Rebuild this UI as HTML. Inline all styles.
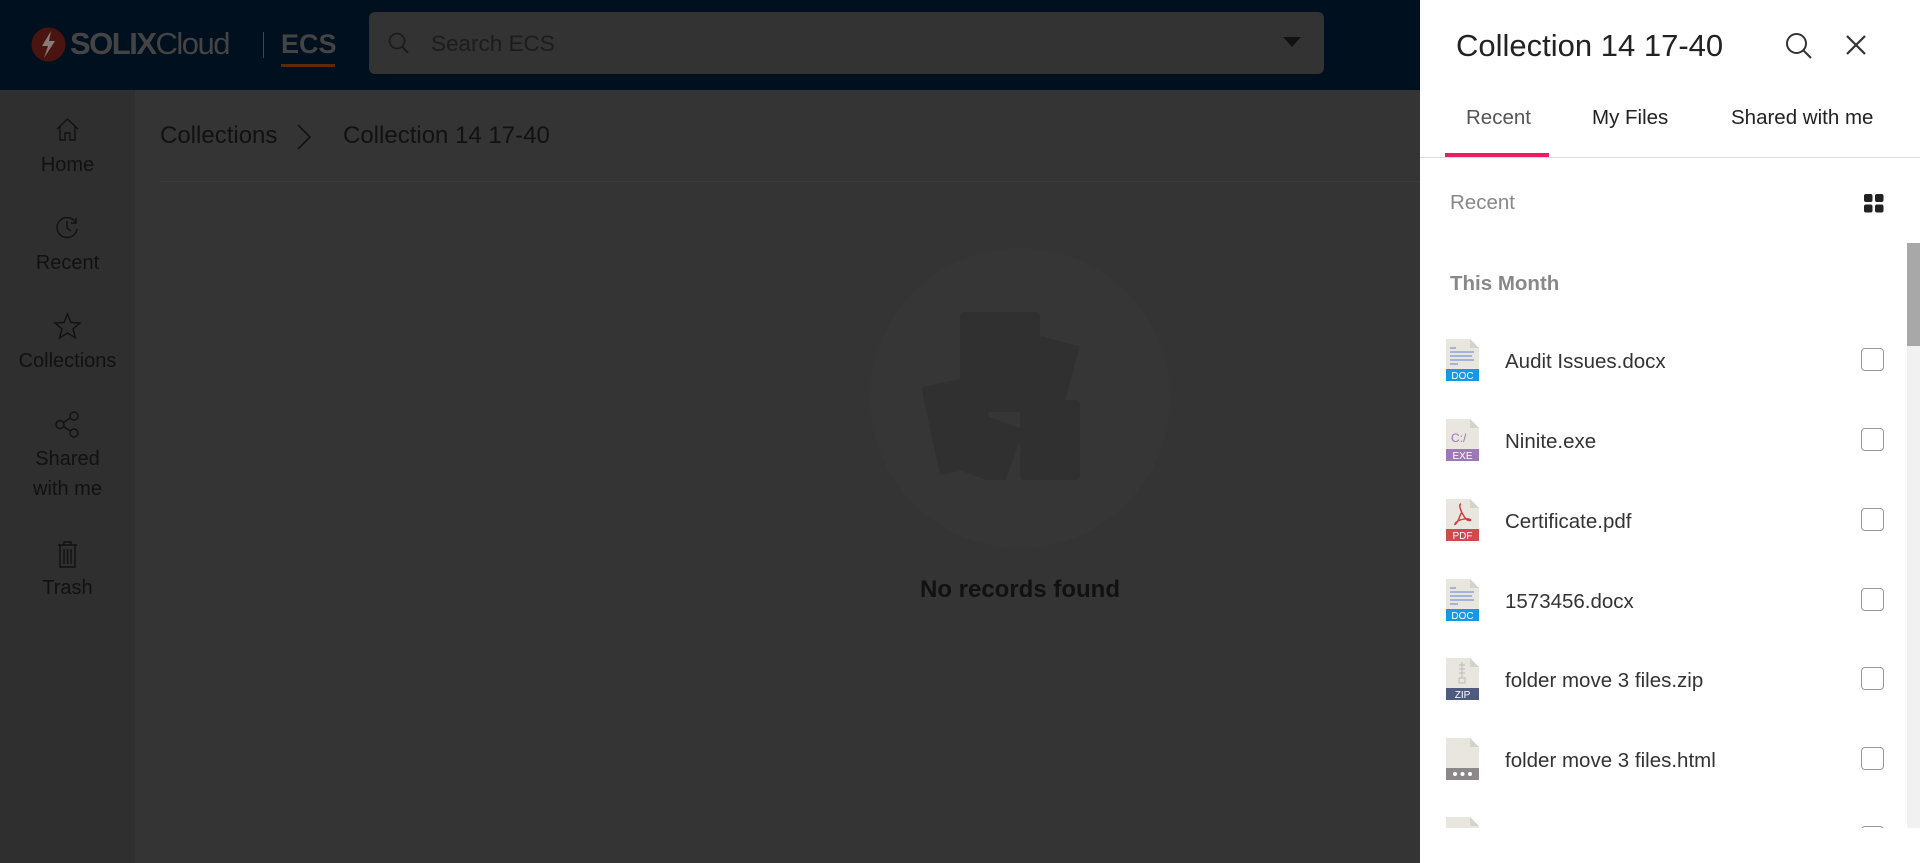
<!DOCTYPE html>
<html><head><meta charset="utf-8"><style>
*{margin:0;padding:0;box-sizing:border-box}
body{width:1920px;height:863px;overflow:hidden;position:relative;background:#343434;font-family:"Segoe UI","Liberation Sans",sans-serif}
.hdr{position:absolute;left:0;top:0;width:1420px;height:90px;background:#00101f}
.side{position:absolute;left:0;top:90px;width:135px;height:773px;background:#2f2f2f}
.item{position:absolute;left:0;width:135px;text-align:center;color:#111;font-size:20px;line-height:30px}
.ab{position:absolute}
.panel{position:absolute;left:1420px;top:0;width:500px;height:863px;background:#fff}
.row{position:absolute;left:0;width:500px;height:60px}
.row .nm{position:absolute;left:85px;top:50%;transform:translateY(-50%);font-size:20.5px;color:#333;white-space:nowrap;margin-top:2px}
.row .cb{position:absolute;left:441px;top:50%;margin-top:-12px;width:23px;height:23px;border:1.5px solid #999;border-radius:4px}
.fi{position:absolute;left:26px;top:50%;margin-top:-21px;width:33px;height:42px}
</style></head><body>
<div class="hdr">
  <svg class="ab" style="left:31px;top:27px" width="35" height="35" viewBox="0 0 35 35"><circle cx="17.5" cy="17.5" r="17" fill="#4a1410"/><path d="M20 4 L11 19 L17 19 L13 31 L24 14 L18 14 Z" fill="#8a7a78"/></svg>
  <div class="ab" style="left:70px;top:26px;font-size:31px;font-weight:bold;color:#444;letter-spacing:-1.5px;font-family:'Liberation Sans',sans-serif">SOLIX<span style="font-weight:normal">Cloud</span></div>
  <div class="ab" style="left:263px;top:32px;width:1px;height:26px;background:#444"></div>
  <div class="ab" style="left:281px;top:29px;font-size:27px;font-weight:bold;color:#444;font-family:'Liberation Sans',sans-serif">ECS</div>
  <div class="ab" style="left:281px;top:64px;width:54px;height:3px;background:#5a2a10"></div>
  <div class="ab" style="left:369px;top:12px;width:955px;height:62px;background:#333;border-radius:6px"></div>
  <svg class="ab" style="left:388px;top:32px" width="22" height="24" viewBox="0 0 22 24"><circle cx="9" cy="9" r="7.5" fill="none" stroke="#1a1a1a" stroke-width="1.6"/><path d="M14.5 15 L20 21" stroke="#1a1a1a" stroke-width="2"/></svg>
  <div class="ab" style="left:431px;top:31px;font-size:22.5px;color:#1c1c1c">Search ECS</div>
  <svg class="ab" style="left:1283px;top:37px" width="18" height="11"><path d="M0 0 L18 0 L9 10 Z" fill="#111"/></svg>
</div>
<div class="side">
  <svg class="ab" style="left:54px;top:26px" width="27" height="27" viewBox="0 0 27 27" fill="none" stroke="#111" stroke-width="1.4"><path d="M3 13 L13.5 3 L24 13 M6 11 V24 H11 V17 H16 V24 H21 V11"/></svg>
  <div class="item" style="top:60px">Home</div>
  <svg class="ab" style="left:54px;top:124px" width="27" height="27" viewBox="0 0 27 27" fill="none" stroke="#111" stroke-width="1.4"><path d="M22 9 A10 10 0 1 0 23 15"/><path d="M13 7 V14 L17 17"/><path d="M22 4 V9 H17"/></svg>
  <div class="item" style="top:158px">Recent</div>
  <svg class="ab" style="left:53px;top:222px" width="29" height="29" viewBox="0 0 29 29" fill="none" stroke="#111" stroke-width="1.4"><path d="M14.5 2 L18 10.5 L27 11 L20 17 L22.5 26 L14.5 21 L6.5 26 L9 17 L2 11 L11 10.5 Z"/></svg>
  <div class="item" style="top:256px">Collections</div>
  <svg class="ab" style="left:53px;top:320px" width="29" height="29" viewBox="0 0 29 29" fill="none" stroke="#111" stroke-width="1.4"><circle cx="21" cy="6" r="4"/><circle cx="7" cy="14.5" r="4"/><circle cx="21" cy="23" r="4"/><path d="M10.5 12.5 L17.5 8 M10.5 16.5 L17.5 21"/></svg>
  <div class="item" style="top:354px">Shared<br>with me</div>
  <svg class="ab" style="left:54px;top:450px" width="27" height="29" viewBox="0 0 27 29" fill="none" stroke="#111" stroke-width="1.4"><path d="M4 5 H23 M10 5 V2 H17 V5 M6 5 V27 H21 V5 M10 9 V24 M13.5 9 V24 M17 9 V24"/></svg>
  <div class="item" style="top:483px">Trash</div>
</div>
<div class="ab" style="left:160px;top:122px;font-size:24px;color:#111">Collections</div>
<svg class="ab" style="left:296px;top:123px" width="16" height="28"><path d="M2 2 L14 14 L2 26" fill="none" stroke="#111" stroke-width="1.6"/></svg>
<div class="ab" style="left:343px;top:122px;font-size:24px;color:#111">Collection 14 17-40</div>
<div class="ab" style="left:160px;top:181px;width:1260px;height:1px;background:#3a3a3a"></div>
<div class="ab" style="left:870px;top:248px;width:300px;height:300px;border-radius:50%;background:#363636"></div>
<svg class="ab" style="left:920px;top:300px" width="200" height="180" viewBox="0 0 200 180" fill="#303030"><rect x="40" y="12" width="80" height="100" rx="4"/><rect x="110" y="40" width="40" height="80" transform="rotate(15 130 80)"/><rect x="10" y="80" width="60" height="90" rx="4" transform="rotate(-12 40 125)"/><rect x="50" y="120" width="45" height="60" transform="rotate(20 72 150)"/><rect x="100" y="100" width="60" height="80" rx="4"/></svg>
<div class="ab" style="left:870px;top:576px;width:300px;text-align:center;font-size:24px;font-weight:600;color:#111">No records found</div>

<div class="panel">
  <div class="ab" style="left:36px;top:28px;font-size:31px;color:#222">Collection 14 17-40</div>
  <svg class="ab" style="left:365px;top:32px" width="28" height="28" viewBox="0 0 28 28" fill="none" stroke="#333" stroke-width="2"><circle cx="11.5" cy="11.5" r="9.5"/><path d="M18.5 18.5 L26 26"/></svg>
  <svg class="ab" style="left:426px;top:35px" width="20" height="20" viewBox="0 0 20 20" stroke="#333" stroke-width="2.2"><path d="M1 1 L19 19 M19 1 L1 19"/></svg>
  <div class="ab" style="left:46px;top:106px;font-size:20.5px;color:#555">Recent</div>
  <div class="ab" style="left:172px;top:106px;font-size:20.5px;color:#222">My Files</div>
  <div class="ab" style="left:311px;top:106px;font-size:20.5px;color:#222">Shared with me</div>
  <div class="ab" style="left:25px;top:153px;width:104px;height:4px;background:#ea1e63"></div>
  <div class="ab" style="left:0;top:157px;width:500px;height:1px;background:#dcdcdc"></div>
  <div class="ab" style="left:30px;top:191px;font-size:20.5px;color:#888">Recent</div>
  <svg class="ab" style="left:444px;top:194px" width="20" height="19"><rect x="0" y="0" width="8.5" height="8" rx="2" fill="#222"/><rect x="11" y="0" width="8.5" height="8" rx="2" fill="#222"/><rect x="0" y="10.5" width="8.5" height="8" rx="2" fill="#222"/><rect x="11" y="10.5" width="8.5" height="8" rx="2" fill="#222"/></svg>
  <div class="ab" style="left:487px;top:243px;width:13px;height:585px;background:#f1f1f1"></div>
  <div class="ab" style="left:487px;top:243px;width:13px;height:103px;background:#a8a8a8"></div>
  <div class="ab" style="left:30px;top:272px;font-size:20.5px;font-weight:600;color:#888">This Month</div>
  <div class="ab" style="left:0;top:320px;width:487px;height:508px;overflow:hidden">
    <div class="row" style="top:10px"><svg class="fi" viewBox="0 0 33 42"><path d="M0 0 H24 L33 9 V42 H0 Z" fill="#e8e6df"/><path d="M24 0 V9 H33" fill="#d4d2ca"/><path d="M4 9 H10 M4 13 H28 M4 17 H26 M4 21 H28 M4 25 H12" stroke="#7a95d8" stroke-width="1.2"/><rect x="0" y="30" width="33" height="12" fill="#1a96e8"/><text x="16.5" y="40" font-size="10" fill="#fff" text-anchor="middle" font-family="Liberation Sans">DOC</text></svg><div class="nm">Audit Issues.docx</div><div class="cb"></div></div>
    <div class="row" style="top:90px"><svg class="fi" viewBox="0 0 33 42"><path d="M0 0 H24 L33 9 V42 H0 Z" fill="#e8e6df"/><path d="M24 0 V9 H33" fill="#d4d2ca"/><text x="5" y="23" font-size="12" fill="#9a74b4" font-family="Liberation Sans">C:/</text><rect x="0" y="30" width="33" height="12" fill="#9c78b6"/><text x="16.5" y="40" font-size="10" fill="#fff" text-anchor="middle" font-family="Liberation Sans">EXE</text></svg><div class="nm">Ninite.exe</div><div class="cb"></div></div>
    <div class="row" style="top:170px"><svg class="fi" viewBox="0 0 33 42"><path d="M0 0 H24 L33 9 V42 H0 Z" fill="#e8e6df"/><path d="M24 0 V9 H33" fill="#d4d2ca"/><path d="M15 5 C12 5 15 14 20 20 C23 23 27 21 23 20 C17 19 10 22 9 25 C8 27 12 24 15 14" fill="none" stroke="#d03a3a" stroke-width="1.4"/><rect x="0" y="30" width="33" height="12" fill="#d34848"/><text x="16.5" y="40" font-size="10" fill="#fff" text-anchor="middle" font-family="Liberation Sans">PDF</text></svg><div class="nm">Certificate.pdf</div><div class="cb"></div></div>
    <div class="row" style="top:250px"><svg class="fi" viewBox="0 0 33 42"><path d="M0 0 H24 L33 9 V42 H0 Z" fill="#e8e6df"/><path d="M24 0 V9 H33" fill="#d4d2ca"/><path d="M4 9 H10 M4 13 H28 M4 17 H26 M4 21 H28 M4 25 H12" stroke="#7a95d8" stroke-width="1.2"/><rect x="0" y="30" width="33" height="12" fill="#1a96e8"/><text x="16.5" y="40" font-size="10" fill="#fff" text-anchor="middle" font-family="Liberation Sans">DOC</text></svg><div class="nm">1573456.docx</div><div class="cb"></div></div>
    <div class="row" style="top:329px"><svg class="fi" viewBox="0 0 33 42"><path d="M0 0 H24 L33 9 V42 H0 Z" fill="#e8e6df"/><path d="M24 0 V9 H33" fill="#d4d2ca"/><path d="M16 4 V20 M13 7 H19 M13 11 H19 M13 15 H19" stroke="#bbb" stroke-width="1"/><rect x="13" y="20" width="6" height="5" fill="none" stroke="#bbb"/><rect x="0" y="30" width="33" height="12" fill="#4f5b7e"/><text x="16.5" y="40" font-size="10" fill="#fff" text-anchor="middle" font-family="Liberation Sans">ZIP</text></svg><div class="nm">folder move 3 files.zip</div><div class="cb"></div></div>
    <div class="row" style="top:409px"><svg class="fi" viewBox="0 0 33 42"><path d="M0 0 H24 L33 9 V42 H0 Z" fill="#e8e6df"/><path d="M24 0 V9 H33" fill="#d4d2ca"/><rect x="0" y="30" width="33" height="12" fill="#8c8788"/><circle cx="9" cy="36" r="2" fill="#fff"/><circle cx="16.5" cy="36" r="2" fill="#fff"/><circle cx="24" cy="36" r="2" fill="#fff"/></svg><div class="nm">folder move 3 files.html</div><div class="cb"></div></div>
    <div class="row" style="top:488px"><svg class="fi" viewBox="0 0 33 42"><path d="M0 0 H24 L33 9 V42 H0 Z" fill="#e8e6df"/><path d="M24 0 V9 H33" fill="#d4d2ca"/></svg><div class="cb"></div></div>
  </div>
</div>
</body></html>
